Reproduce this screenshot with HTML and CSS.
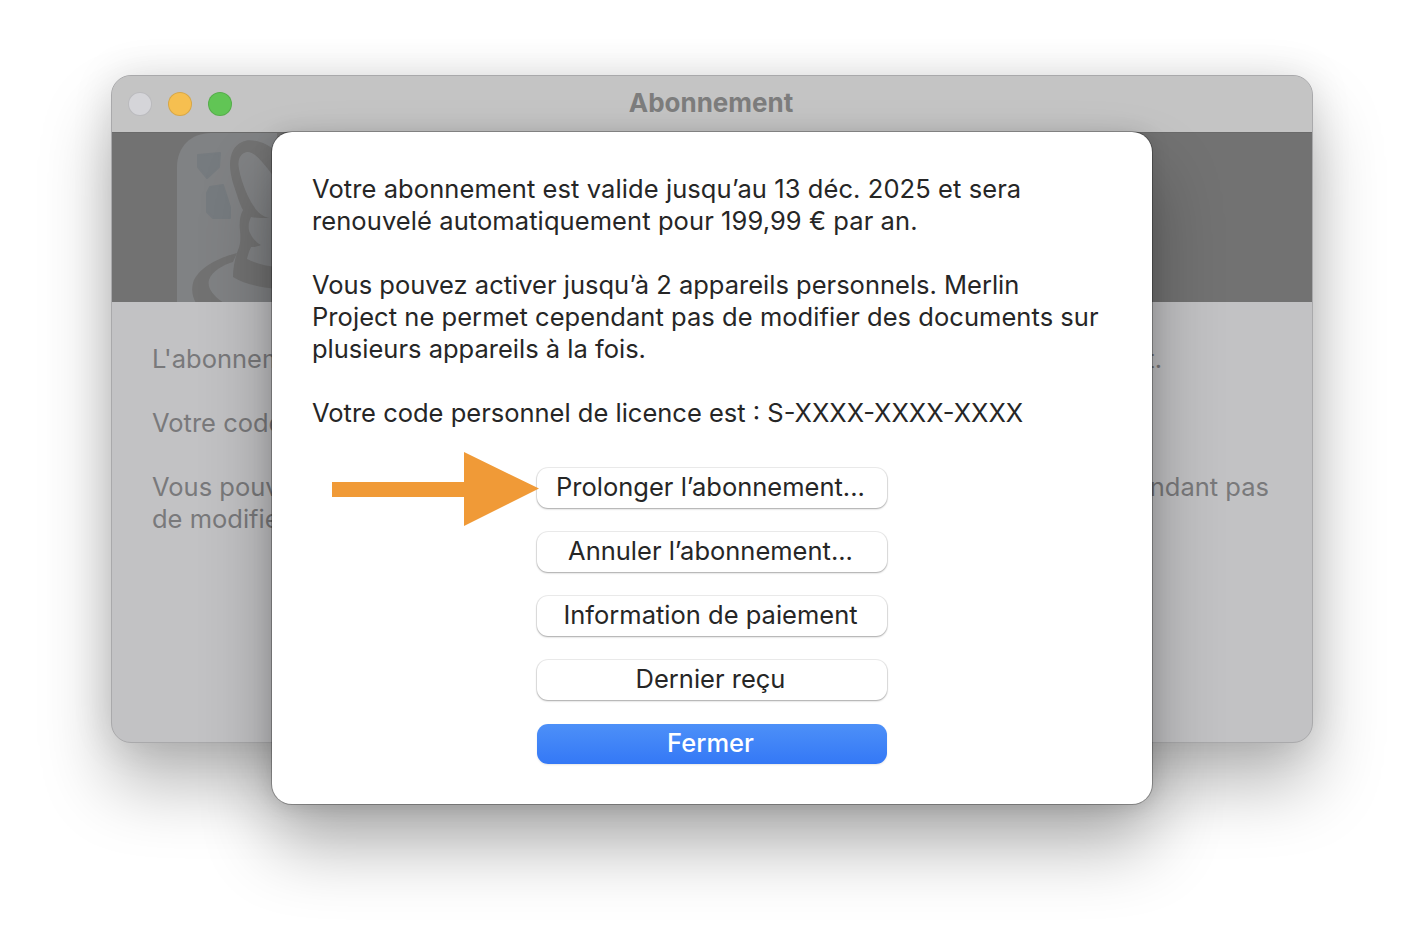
FILE: index.html
```html
<!DOCTYPE html>
<html lang="fr">
<head>
<meta charset="utf-8">
<title>Abonnement</title>
<link rel="stylesheet" href="styles.css">
</head>
<body>
<div class="window">
  <header class="titlebar">
    <div class="lights">
      <span class="light close"></span>
      <span class="light min"></span>
      <span class="light max"></span>
    </div>
    <span class="title">Abonnement</span>
  </header>
  <div class="banner">
    <svg class="mascot" viewBox="0 0 100 170" width="100" height="170" aria-hidden="true">
      <path d="M0 170V34C0 14 14 0 34 0H100V170Z" fill="#808284"/>
      <path d="M21 22l22-2-1 14-12 11-9-11z" fill="#767b7f" stroke="#767b7f" stroke-width="2" stroke-linejoin="round"/>
      <path d="M33 54l13-2 7 22v11H36l-6-6V60z" fill="#767b7f" stroke="#767b7f" stroke-width="2" stroke-linejoin="round"/>
      <path fill-rule="evenodd" fill="#727272" d="M95 15C85 8 72 5 65 9 53 14 50 30 56 50 60 62 63 72 66 77 63 82 62 90 63 98 64 106 63 113 61 117 58 125 56 135 56 144 65 150 80 154 100 156V15ZM70 19C64 20 60 26 62 36 65 52 72 66 76 72 80 79 85 83 92 85 85 85 79 85 74 84 71 90 71 96 73 100 76 106 80 110 84 112 80 114 76 114 74 114 72 118 71 122 70 126 78 130 88 133 100 134V48C88 32 78 18 70 19Z"/>
      <path fill="#727272" d="M60 120C40 125 20 136 16 150 14 158 16 165 19 170H47C36 163 30 155 32 147 35 138 46 132 56 129Z"/>
    </svg>
  </div>
  <div class="under">
    <p>L'abonnement<span class="edge">t.</span></p>
    <p>Votre code</p>
    <p class="pair">Vous pouvez<span>ndant pas</span></p>
    <p>de modifier</p>
  </div>
</div>

<section class="sheet">
  <div class="copy">
    <p class="loose">Votre abonnement est valide jusqu’au 13 déc. 2025 et sera<br>renouvelé automatiquement pour 199,99 € par an.</p>
    <p>Vous pouvez activer jusqu’à 2 appareils personnels. Merlin<br><span class="slight">Project ne permet cependant pas de modifier des documents sur</span><br>plusieurs appareils à la fois.</p>
    <p>Votre code personnel de licence est : S-XXXX-XXXX-XXXX</p>
  </div>
  <div class="actions">
    <button class="btn">Prolonger l’abonnement...</button>
    <button class="btn">Annuler l’abonnement...</button>
    <button class="btn">Information de paiement</button>
    <button class="btn">Dernier reçu</button>
    <button class="btn primary">Fermer</button>
  </div>
  <svg class="arrow" viewBox="0 0 208 76" width="208" height="76" aria-hidden="true">
    <path d="M0 31H132V1L207 37.500 132 75V46H0Z" fill="#f09a37"/>
  </svg>
</section>
</body>
</html>
```
FILE: styles.css
```css
* { box-sizing: border-box; }
html, body { margin: 0; height: 100%; }
body {
  background: #fff;
  width: 1424px;
  height: 952px;
  position: relative;
  overflow: hidden;
  font-family: Inter, "Liberation Sans", sans-serif;
  padding: 75px 111px 0;
}
.window {
  width: 1202px;
  height: 668px;
  border-radius: 20px;
  background: #c2c2c4;
  border: 1px solid #a9a9ab;
  overflow: hidden;
  box-shadow: 0 42px 70px rgba(0,0,0,.28), 0 0 40px rgba(0,0,0,.12);
}
.titlebar {
  height: 57px;
  background: #c4c4c4;
  border-bottom: 1px solid #6a6a6a;
  position: relative;
  display: flex;
  align-items: center;
  justify-content: center;
}
.lights {
  position: absolute;
  left: 16px;
  top: 16px;
  display: flex;
  gap: 16px;
}
.light { width: 24px; height: 24px; border-radius: 50%; border: 1px solid rgba(0,0,0,.12); }
.close { background: #d5d5d9; }
.min { background: #f6bf50; }
.max { background: #61c555; }
.title { font-size: 26px; font-weight: 700; color: #7d7d7d; margin: -3px 2px 0 0; }
.banner { height: 169px; background: #727272; padding-left: 65px; overflow: hidden; }
.mascot { display: block; }
.under { padding: 41px 43px 0 40px; font-size: 25.500px; line-height: 32px; color: #79797b; }
.under p { margin: 0 0 32px; display: flex; justify-content: space-between; }
.under .pair { margin: 0; }
.under .edge { margin-right: 107px; }
.sheet {
  position: absolute;
  left: 272px;
  top: 132px;
  width: 880px;
  height: 672px;
  background: #fff;
  border-radius: 20px;
  box-shadow: 0 0 0 1px rgba(0,0,0,.28), 0 42px 70px rgba(0,0,0,.30), 0 0 20px rgba(0,0,0,.12);
  padding: 41px 40px 0;
}
.copy { font-size: 25.500px; line-height: 32px; color: #262626; }
.copy p { margin: 0 0 32px; white-space: nowrap; }
.copy .loose { letter-spacing: .085px; }
.copy .slight { letter-spacing: .05px; }
.actions {
  display: flex;
  flex-direction: column;
  align-items: center;
  gap: 24px;
  margin-top: 39px;
}
.btn {
  width: 350px;
  height: 40px;
  border: 0;
  border-radius: 11px;
  background: #fff;
  color: #262626;
  font: 400 25.500px Inter, "Liberation Sans", sans-serif;
  box-shadow: 0 0 0 1px rgba(0,0,0,.07), 0 1px 2px rgba(0,0,0,.3);
  padding: 0 3px 4px 0;
}
.primary {
  color: #fff;
  font-weight: 500;
  background: linear-gradient(#4d90f8, #3478f6);
  box-shadow: 0 1px 2px rgba(0,0,0,.1);
}
.arrow { position: absolute; left: 60px; top: 319px; }
```
